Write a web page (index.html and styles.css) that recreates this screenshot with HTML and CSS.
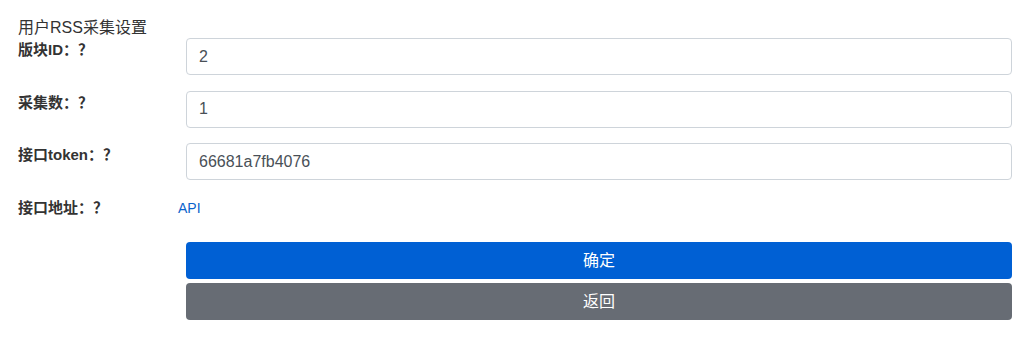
FILE: index.html
```html
<!DOCTYPE html>
<html lang="zh">
<head>
<meta charset="utf-8">
<title>用户RSS采集设置</title>
<link rel="stylesheet" href="styles.css">
</head>
<body>
<div class="page">
  <div class="title">用户RSS采集设置</div>
  <form class="form">
    <div class="row">
      <label class="label">版块ID：？</label>
      <div class="field"><input class="input" type="text" value="2"></div>
    </div>
    <div class="row">
      <label class="label">采集数：？</label>
      <div class="field"><input class="input" type="text" value="1"></div>
    </div>
    <div class="row">
      <label class="label">接口token：？</label>
      <div class="field"><input class="input" type="text" value="66681a7fb4076"></div>
    </div>
    <div class="row">
      <label class="label">接口地址：？</label>
      <div class="field"><a class="link" href="#">API</a></div>
    </div>
    <div class="actions">
      <button class="btn btn-primary" type="button">确定</button>
      <button class="btn btn-secondary" type="button">返回</button>
    </div>
  </form>
</div>
</body>
</html>
```
FILE: styles.css
```css
* { box-sizing: border-box; }
html, body { margin: 0; padding: 0; background: #fff; }
body {
  font-family: "Liberation Sans", "Noto Sans CJK SC", sans-serif;
  color: #333;
}
.page {
  padding: 18px 12px 0 18px;
}
.title {
  font-size: 16px;
  line-height: 20px;
  color: #333;
}
.form {
  display: flex;
  flex-direction: column;
  gap: 15.5px;
}
.row {
  display: grid;
  grid-template-columns: 160px 1fr;
  align-items: start;
}
.label {
  font-size: 15px;
  font-weight: bold;
  line-height: 20px;
  padding-top: 2px;
  color: #333;
}
.field { min-width: 0; }
.input {
  display: block;
  width: calc(100% - 8px);
  margin-left: 8px;
  height: 37px;
  padding: 0 12px;
  border: 1px solid #ced4da;
  border-radius: 4px;
  font-family: "Liberation Sans", "Noto Sans CJK SC", sans-serif;
  font-size: 16px;
  color: #495057;
  background: #fff;
  outline: none;
}
.link {
  display: block;
  font-size: 14px;
  line-height: 20px;
  padding-top: 2px;
  color: #0a63cc;
  text-decoration: none;
}
.actions {
  display: flex;
  flex-direction: column;
  gap: 4px;
  margin-top: 9px;
  margin-left: 168px;
}
.btn {
  display: block;
  width: 100%;
  height: 37px;
  padding: 0;
  border: none;
  border-radius: 4px;
  font-family: "Liberation Sans", "Noto Sans CJK SC", sans-serif;
  font-size: 16px;
  line-height: 20px;
  color: #fff;
  cursor: pointer;
}
.btn-primary { background: #0060d4; }
.btn-secondary { background: #676c74; }
```
